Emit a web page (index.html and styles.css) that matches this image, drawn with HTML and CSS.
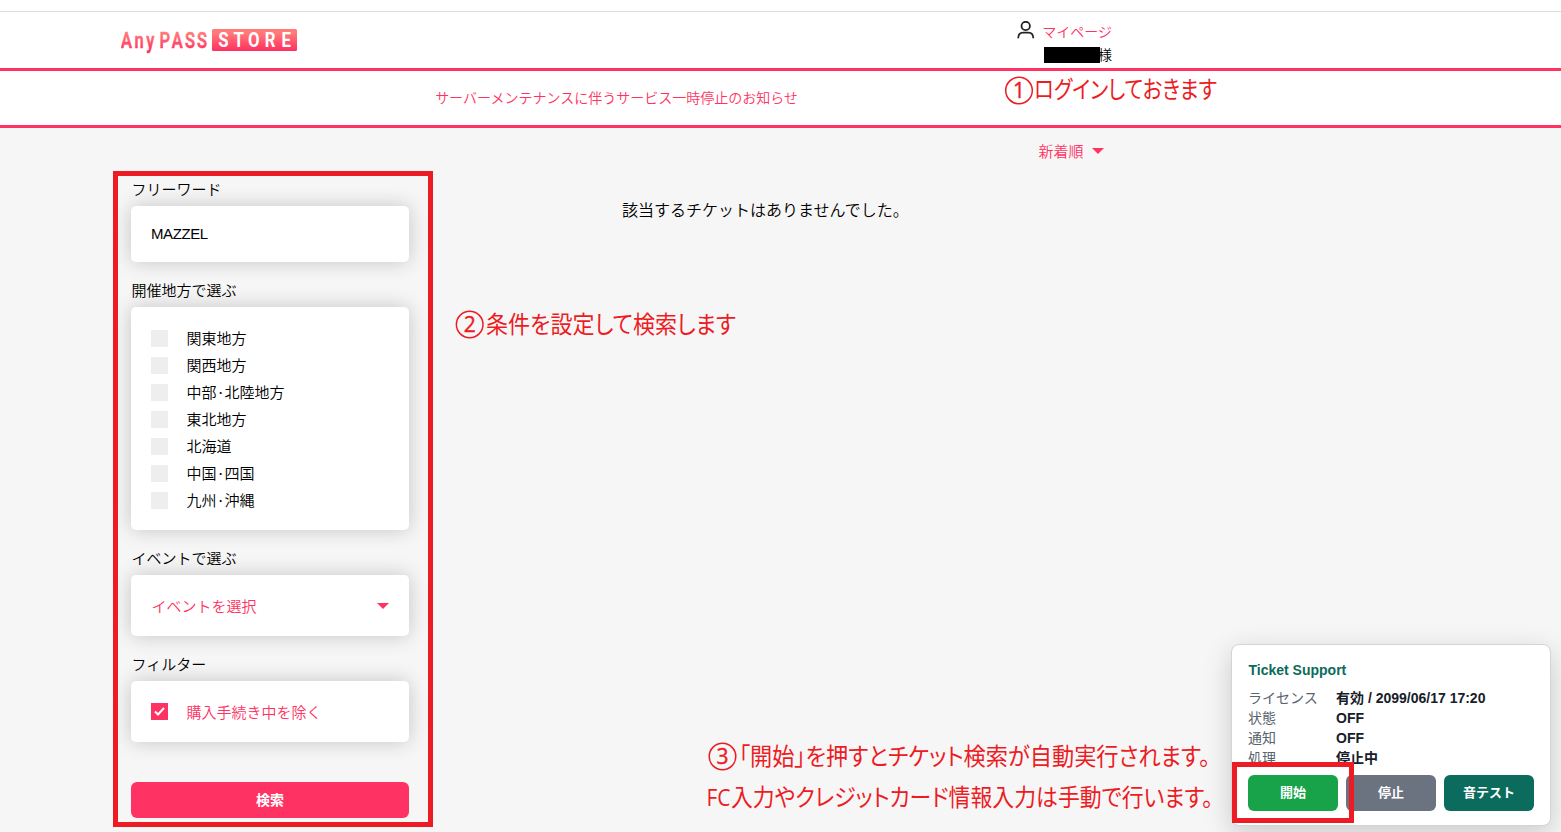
FILE: index.html
```
<!DOCTYPE html>
<html lang="ja">
<head>
    <meta charset="UTF-8">
    <meta name="viewport" content="width=device-width, initial-scale=1.0">
    <title>AnyPASS STORE</title>
    <link rel="stylesheet" href="styles.css">
</head>
<body>
    <header class="header">
        <div class="inner">
            <a href="#" class="logo">
                <svg width="177" height="26" viewBox="0 0 177 26">
                    <defs>
                        <linearGradient id="pink" gradientUnits="userSpaceOnUse" x1="0" y1="3" x2="0" y2="24">
                            <stop offset="0.1" stop-color="#ff7a78"/>
                            <stop offset="0.95" stop-color="#ff2f62"/>
                        </linearGradient>
                    </defs>
                    <text class="logo-any" transform="scale(.75 1)" x="7.300 24 39 58.500 75 92 108" y="20" fill="url(#pink)">AnyPASS</text>
                    <rect x="91" y="1" width="85" height="22" rx="1.500" fill="url(#pink)"/>
                    <text class="logo-store" transform="scale(.8 1)" x="128 147 166 186.500 206.500" y="19" fill="#fff">STORE</text>
                </svg>
            </a>
            <div class="user">
                <svg class="user-icon" width="18" height="18" viewBox="0 0 18 18" fill="none" stroke="#222" stroke-width="1.800">
                    <circle cx="8.700" cy="5" r="4.200"/>
                    <path d="M1.200 17.300c0-3.700 1.800-5.700 4.800-5.700h5.500c3 0 4.800 2 4.800 5.700"/>
                </svg>
                <div class="user-text">
                    <a href="#">マイページ</a>
                    <p><span class="mask"></span>様</p>
                </div>
            </div>
        </div>
    </header>
    <div class="notice"><a href="#">サーバーメンテナンスに伴うサービス一時停止のお知らせ</a></div>

    <div class="main">
        <form class="search">
            <h2>フリーワード</h2>
            <div class="card word">MAZZEL</div>
            <h2>開催地方で選ぶ</h2>
            <ul class="card area">
                <li><i class="check"></i>関東地方</li>
                <li><i class="check"></i>関西地方</li>
                <li><i class="check"></i>中部<b>·</b>北陸地方</li>
                <li><i class="check"></i>東北地方</li>
                <li><i class="check"></i>北海道</li>
                <li><i class="check"></i>中国<b>·</b>四国</li>
                <li><i class="check"></i>九州<b>·</b>沖縄</li>
            </ul>
            <h2>イベントで選ぶ</h2>
            <div class="card select">イベントを選択<i class="arrow"></i></div>
            <h2>フィルター</h2>
            <div class="card filter">
                <i class="check on"><svg width="17" height="17" viewBox="0 0 17 17"><path d="M4 8.500l3 3 6-6.500" fill="none" stroke="#fff" stroke-width="2"/></svg></i>購入手続き中を除く
            </div>
            <button type="button" class="btn-search">検索</button>
        </form>
        <div class="result">
            <div class="sort"><span>新着順</span><i class="arrow"></i></div>
            <p class="empty">該当するチケットはありませんでした。</p>
        </div>
    </div>

    <div class="panel">
        <h3>Ticket Support</h3>
        <dl>
            <dt>ライセンス</dt><dd>有効 / 2099/06/17 17:20</dd>
            <dt>状態</dt><dd>OFF</dd>
            <dt>通知</dt><dd>OFF</dd>
            <dt>処理</dt><dd>停止中</dd>
        </dl>
        <div class="btns">
            <button type="button" class="start">開始</button>
            <button type="button" class="stop">停止</button>
            <button type="button" class="sound">音テスト</button>
        </div>
    </div>

    <!-- 説明の書き込み -->
    <svg class="guide" width="1561" height="832" viewBox="0 0 1561 832">
        <rect x="115.500" y="173.500" width="315" height="651"/>
        <rect x="1234.500" y="764.500" width="117" height="56"/>
        <circle cx="1019" cy="90.500" r="13.300"/>
        <text class="num" x="1019" y="98">1</text>
        <text x="1034" y="98" textLength="183" lengthAdjust="spacingAndGlyphs">ログインしておきます</text>
        <circle cx="469.700" cy="324.500" r="13.300"/>
        <text class="num" x="469.700" y="332">2</text>
        <text x="486" y="333" textLength="250" lengthAdjust="spacingAndGlyphs">条件を設定して検索します</text>
        <circle cx="722.500" cy="756.500" r="13.300"/>
        <text class="num" x="722.500" y="764">3</text>
        <text x="739" y="765" textLength="471" lengthAdjust="spacingAndGlyphs">「開始」を押すとチケット検索が自動実行されます。</text>
        <text class="latin" x="706.500" y="806" textLength="24" lengthAdjust="spacingAndGlyphs">FC</text>
        <text x="731" y="806" textLength="482" lengthAdjust="spacingAndGlyphs">入力やクレジットカード情報入力は手動で行います。</text>
    </svg>
</body>
</html>
```
FILE: styles.css
```
*{padding:0;margin:0;box-sizing:border-box}
li{list-style:none}
a{text-decoration:none;color:#ff3363}
i{font-style:normal}
svg{display:block}
body{
    height:832px;
    overflow:hidden;
    position:relative;
    background:#f6f6f6;
    color:#000;
    font-family:"Noto Sans CJK JP",sans-serif;
    font-size:15px;
    font-weight:350;
}
.header{
    height:71px;
    padding-top:11px;
    background:#fff;
    border-bottom:3px solid #ff3363;
}
.inner{
    display:flex;
    justify-content:space-between;
    padding:0 449px 0 121px;
    border-top:1px solid #ddd;
}
.logo{
    padding-top:16px;
}
.logo-any,.logo-store{
    font-family:Roboto,sans-serif;
    font-weight:700;
    text-anchor:middle;
}
.logo-any{
    font-size:22px;
    font-weight:500;
    stroke:url(#pink);
    stroke-width:.6px;
}
.logo-store{
    font-size:21px;
}
.user{
    display:flex;
    gap:8px;
    font-size:14px;
    line-height:23px;
}
.user-icon{
    margin-top:9px;
}
.user-text{
    padding-top:8px;
}
.user-text p{
    display:flex;
    justify-content:flex-end;
    align-items:center;
}
.user-text a{
    display:block;
    margin-left:-1px;
}
.mask{
    width:56px;
    height:16px;
    margin-right:-2px;
    background:#000;
    position:relative;
}
.notice{
    height:57px;
    padding-right:328px;
    line-height:53px;
    font-size:14px;
    text-align:center;
    background:#fff;
    border-bottom:3px solid #ff3363;
}
.main{
    display:flex;
    padding-left:131px;
}
.search{
    width:278px;
    padding-top:33px;
}
.search h2{
    height:24px;
    margin:16px 0 5px;
    padding-left:.5px;
    line-height:23px;
    font-size:15px;
    font-weight:350;
}
.card{
    padding:0 20px;
    border-radius:5px;
    background:#fff;
    box-shadow:0 0 20px rgba(0,0,0,0.2);
}
.word{
    height:56px;
    line-height:56px;
    font-family:"Liberation Sans",sans-serif;
    letter-spacing:-.4px;
}
.area{
    height:223px;
    padding-top:18px;
}
.area li{
    display:flex;
    height:27px;
    line-height:26px;
}
.area b{
    width:8px;
    font-weight:400;
    text-align:center;
}
.check{
    width:17px;
    height:17px;
    margin:5px 18.5px 5px 0;
    background:#eee;
}
.check.on{
    background:#ff3363;
}
.select,.filter{
    display:flex;
    align-items:center;
    height:61px;
    color:#ff3363;
}
.select{
    justify-content:space-between;
    padding-left:20.5px;
}
.arrow{
    border:6px solid transparent;
    border-top-color:#ff3363;
    border-bottom:0;
}
.btn-search{
    display:block;
    width:100%;
    height:36px;
    margin-top:40px;
    padding-bottom:2px;
    border:0;
    border-radius:6px;
    background:#ff3363;
    color:#fff;
    font:bold 14px "Noto Sans CJK JP",sans-serif;
}
.result{
    width:702px;
}
.sort{
    display:flex;
    justify-content:flex-end;
    align-items:center;
    gap:8.5px;
    height:46px;
    padding-right:7px;
    color:#ff3363;
}
.sort span{
    padding-bottom:2px;
}
.empty{
    margin-top:23px;
    padding-left:213px;
    font-size:16px;
    line-height:24px;
}
.panel{
    position:absolute;
    left:1231px;
    top:644px;
    width:320px;
    height:182px;
    padding:16px;
    border:1px solid #d0d5d5;
    border-radius:8px;
    background:#fff;
    box-shadow:0 8px 28px rgba(0,0,0,0.18);
    font-family:"Liberation Sans","Noto Sans CJK JP",sans-serif;
    font-size:14px;
    line-height:20px;
}
.panel h3{
    margin-bottom:8px;
    padding-left:.5px;
    font-size:14px;
    line-height:19px;
    color:#0b6b5d;
}
.panel dl{
    display:grid;
    grid-template-columns:88px 1fr;
    grid-auto-rows:20px;
}
.panel dt{
    color:#59636e;
    font-weight:400;
}
.panel dd{
    color:#17202a;
    font-weight:bold;
}
.btns{
    display:flex;
    gap:8px;
    margin-top:7px;
}
.btns button{
    width:90px;
    height:36px;
    padding-bottom:3px;
    border:0;
    border-radius:6px;
    color:#fff;
    font:bold 13px "Noto Sans CJK JP",sans-serif;
}
.btns .start{background:#18a34a}
.btns .stop{background:#6b7280}
.btns .sound{background:#0b6b5d}
.guide{
    position:absolute;
    left:0;
    top:0;
    font-size:24px;
    font-weight:400;
    font-feature-settings:"palt";
    fill:#ed1c24;
}
.guide rect{
    fill:none;
    stroke:#ed1c24;
    stroke-width:5px;
}
.guide circle{
    fill:none;
    stroke:#ed1c24;
    stroke-width:1.5px;
}
.guide .num{
    font-family:"Open Sans",sans-serif;
    font-size:21px;
    text-anchor:middle;
    stroke:#ed1c24;
    stroke-width:.4px;
}
.guide .latin{
    font-family:"Open Sans",sans-serif;
    font-size:23px;
}
```
